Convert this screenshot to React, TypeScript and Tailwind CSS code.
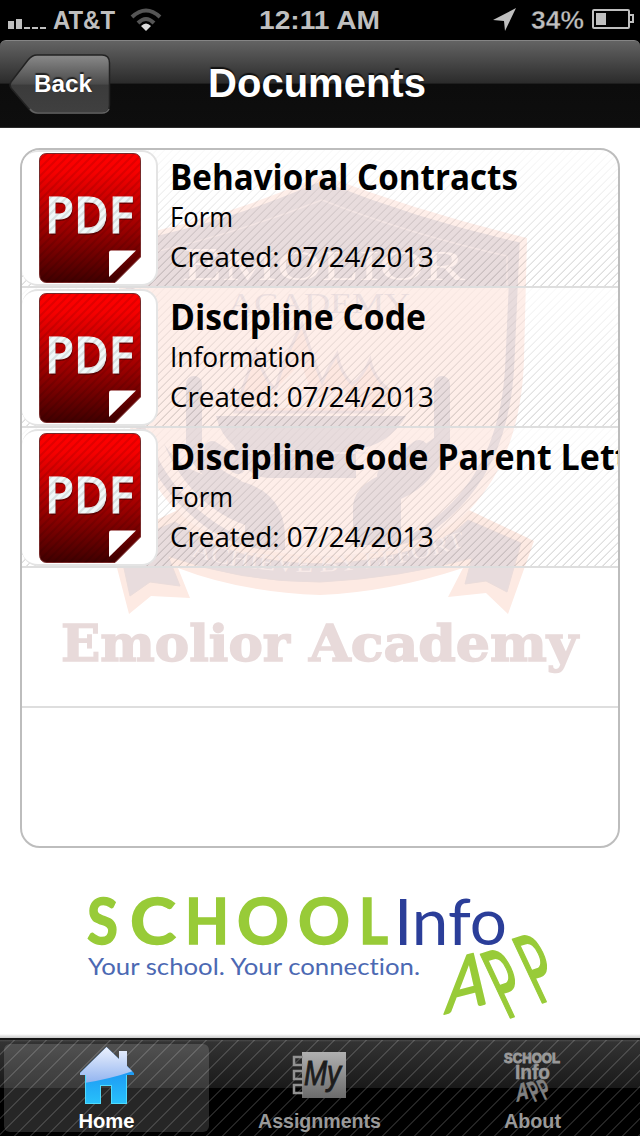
const documents = [
  { title: 'Behavioral Contracts', type: 'Form', created: '07/24/2013', titleWidth: 348, typeWidth: 63 },
  { title: 'Discipline Code', type: 'Information', created: '07/24/2013', titleWidth: 256, typeWidth: 146 },
  { title: 'Discipline Code Parent Letter', type: 'Form', created: '07/24/2013', titleWidth: 495, typeWidth: 63 },
];

function StatusBar() {
  return (
    <div className="flex h-10 items-center bg-black text-[#bfbfbf]">
      <svg width="640" height="40" fontFamily="Liberation Sans" fontWeight="700" fontSize="26" fill="currentColor">
        {/* Signal */}
        <path d="M8 21h6v8h-6zM16 19h6v10h-6zM24 27h6v2h-6zM32 27h6v2h-6zM40 27h6v2h-6z" />
        <text x="53" y="29" textLength="62" lengthAdjust="spacingAndGlyphs">AT&amp;T</text>
        {/* Wifi */}
        <g fill="none" stroke="#555" strokeWidth="4">
          <path d="M132 17Q146 4 160 17" />
          <path d="M138 23Q146 15 154 23" />
        </g>
        <path d="M141 26Q146 21 151 26L146 31z" fill="#ddd" />
        <text x="259" y="29" textLength="121" lengthAdjust="spacingAndGlyphs">12:11 AM</text>
        {/* Location */}
        <path d="M516 8L493 20L504 21L505 31z" />
        <text x="531" y="29" textLength="53" lengthAdjust="spacingAndGlyphs" stroke="#000" strokeWidth="0.400">34%</text>
        {/* Battery */}
        <rect x="593" y="10" width="36" height="18" rx="1" fill="none" stroke="currentColor" strokeWidth="2" />
        <path d="M630 15h3v7h-3" fill="none" stroke="currentColor" strokeWidth="2" />
        <rect x="596" y="13" width="10" height="12" />
      </svg>
    </div>
  );
}

function NavBar() {
  return (
    <div className="bg-black">
      <header className="relative flex h-[88px] items-center justify-center rounded-t-md border-t border-b border-t-[#858585] border-b-[#2b2b2b] bg-[linear-gradient(#636363,#2b2b2b_49%,#0c0c0c_50%,#0e0e0e)]">
        <button className="absolute top-[11px] left-2">
          <svg width="104" height="64" viewBox="8 52 104 64">
            <defs>
              <linearGradient id="back" x1="0" y1="0" x2="0" y2="1">
                <stop offset="0" stopColor="#8a8a8a" />
                <stop offset="0.5" stopColor="#4a4a4a" />
                <stop offset="0.52" stopColor="#3b3b3b" />
                <stop offset="1" stopColor="#404040" />
              </linearGradient>
            </defs>
            <path d="M37 55H102Q109.500 55 109.500 63V105Q109.500 113 102 113H37Q32 113 28 108L11 88Q9 85 11 82L28 60Q32 55 37 55Z" fill="url(#back)" stroke="#222" strokeWidth="1.5" />
            <path d="M30 109Q33 113 38 113H102Q107 113 109 109" fill="none" stroke="#636363" strokeWidth="1.5" />
            <text x="34" y="92" textLength="58" lengthAdjust="spacingAndGlyphs" fontFamily="Liberation Sans" fontWeight="700" fontSize="24" fill="#fff" className="[text-shadow:0_-2px_1px_#222]">Back</text>
          </svg>
        </button>
        <h1 className="relative -top-px -left-[3px] font-['Liberation_Sans'] text-[40px] leading-none font-bold text-white [text-shadow:0_-2px_1px_#111]">
          Documents
        </h1>
      </header>
    </div>
  );
}

function PdfIcon({ id }: { id: string }) {
  return (
    <svg width="104" height="132" viewBox="38 152 104 132">
      <defs>
        <linearGradient id={id} x1="0" y1="0" x2="0" y2="1">
          <stop offset="0" stopColor="#ff0000" />
          <stop offset="0.15" stopColor="#f50000" />
          <stop offset="0.6" stopColor="#980000" />
          <stop offset="1" stopColor="#400000" />
        </linearGradient>
        <pattern id={`${id}-hatch`} width="8" height="8" patternUnits="userSpaceOnUse">
          <path d="M-2 2L2 -2M-1 9L9 -1M6 10L10 6" stroke="#000" strokeWidth="2" opacity="0.1" />
        </pattern>
      </defs>
      <path d="M47 153.500H133Q140.500 153.500 140.500 161V257L115 282.500H47Q39.500 282.500 39.500 274V161Q39.500 153.500 47 153.500Z" fill={`url(#${id})`} stroke="#7a2a2a" />
      <g fontFamily="Open Sans" fontSize="50" fontWeight="600" strokeWidth="1">
        <text x="46" y="235" textLength="89" lengthAdjust="spacingAndGlyphs" fill="#400" opacity="0.6">PDF</text>
        <text x="45" y="233" textLength="89" lengthAdjust="spacingAndGlyphs" fill="#f1f8f9" stroke="#f1f8f9">PDF</text>
      </g>
      <path d="M47 153.500H133Q140.500 153.500 140.500 161V257L115 282.500H47Q39.500 282.500 39.500 274V161Q39.500 153.500 47 153.500Z" fill={`url(#${id}-hatch)`} />
      <path d="M111 250.500H136L109 277V252.500Q109 250.500 111 250.500Z" fill="#fff" />
    </svg>
  );
}

function Crest() {
  return (
    <svg className="absolute top-0 left-0" width="596" height="696" viewBox="22 150 596 696">
      {/* Shield */}
      <path d="M322 175Q222 220 119 238V360Q125 480 205 535Q260 572 322 592Q390 572 440 535Q520 480 524 360L527 238Q420 212 322 175Z" fill="#feeee9" />
      <path d="M322 186Q222 229 130 246V360Q134 472 212 526Q265 560 322 580Q385 560 432 526Q506 472 510 360L515 246Q418 224 322 186Z" fill="#feeee9" stroke="#e8dcdd" strokeWidth="9" />
      <path d="M322 190Q222 231 130 250V287H513V250Q418 226 322 190Z" fill="#e8dcdd" />
      <path d="M136 285V256Q230 236 322 200Q412 235 507 256V285" fill="none" stroke="#f3e5e4" strokeWidth="1.500" />
      <text x="182" y="280" textLength="283" lengthAdjust="spacingAndGlyphs" fontFamily="Liberation Serif" fontSize="46" fill="#fdefec">E<tspan fontSize="43">MOLIOR</tspan></text>
      <text x="228" y="313" textLength="182" lengthAdjust="spacingAndGlyphs" fontFamily="Liberation Serif" fontSize="30" fill="#ecdfe0">ACADEMY</text>
      {/* Flame */}
      <path d="M235 412Q242 390 256 351Q264 380 276 390Q279 370 302 324Q310 350 322 382Q328 368 337 354Q340 372 352 384Q362 378 370 360Q374 380 392 392L382 412Z" fill="#fde7e0" stroke="#efe0e0" strokeWidth="3" />
      <path d="M260 408Q272 392 302 362Q306 386 320 400L340 384L358 408Z" fill="#feeee9" />
      {/* Bowl */}
      <path d="M216 416H406Q388 446 356 449V478H270Q245 478 234 446Q220 434 216 416Z" fill="#e8dcdd" />
      <path d="M250 453H370" stroke="#f6e9e8" strokeWidth="2" />
      {/* Hands */}
      <g fill="none" stroke="#e8dcdd" strokeLinecap="round">
        <path d="M194 384V450Q207 474 235 486" strokeWidth="16" />
        <path d="M442 384V442L398 474" strokeWidth="16" />
        <path d="M212 449L238 466" strokeWidth="16" />
        <path d="M419 449L386 476" strokeWidth="18" />
      </g>
      <path d="M164 444Q185 478 235 480Q285 490 285 538V550H245V525Q190 505 164 444Z" fill="#e8dcdd" />
      <path d="M447 447Q435 484 401 499V545H353V506Q355 480 401 468Z" fill="#e8dcdd" />
      {/* Ribbon */}
      <path d="M110 541L178 510Q190 530 250 547Q322 564 388 548Q445 535 469 510L534 541L508 614L486 593L448 597L463 568Q390 592 320 595Q240 592 178 568L190 598L151 596L129 614Z" fill="#fdeae3" />
      <path d="M119 545L175 522Q215 550 260 558Q330 572 405 552Q447 542 468 520L521 543L507 592L486 581L465 584L472 558Q400 578 320 582Q240 582 168 556L180 586L150 582L130 596Z" fill="#e8dcdd" stroke="#eadcdb" />
      <path id="motto" d="M190 556Q330 594 480 541" fill="none" />
      <text fontFamily="Liberation Serif" fontSize="23" fill="#f8ebe9">
        <textPath href="#motto" textLength="280" lengthAdjust="spacingAndGlyphs">ACHIEVE BY EFFORT</textPath>
      </text>
      <g fontFamily="DejaVu Serif" fontWeight="700" fontSize="51" fill="#e8dada" stroke="#e8dada" strokeWidth="1.500">
        <text x="61" y="661" textLength="229" lengthAdjust="spacingAndGlyphs">Emolior</text>
        <text x="309" y="661" textLength="269" lengthAdjust="spacingAndGlyphs">Academy</text>
      </g>
    </svg>
  );
}

function DocumentList() {
  return (
    <section className="relative mx-5 mt-5 h-[700px] overflow-hidden rounded-[20px] border-2 border-[#bdbdbd] bg-white">
      <Crest />
      <div className="relative">
        {documents.map((doc, index) => (
          <div key={index} className={index === 0 ? 'relative flex h-[138px] overflow-hidden border-b-2 border-[#dedede]' : 'relative flex h-[140px] overflow-hidden border-b-2 border-[#dedede]'}>
            {/* Hatched background, darker towards the bottom of the row */}
            <div className="absolute inset-0 bg-[repeating-linear-gradient(135deg,transparent_0_4px,#0000002e_4.500px_4.800px,transparent_5.400px_5.657px)] [mask-image:linear-gradient(#0002,#000)]"></div>
            <div className={index === 0 ? 'relative flex h-[136px] w-[136px] shrink-0 justify-center rounded-2xl border-2 border-l-0 border-[#e4e4e4] bg-white pl-0.5' : 'relative mt-px flex h-[137px] w-[136px] shrink-0 justify-center rounded-2xl border-2 border-l-0 border-[#e4e4e4] bg-white pt-px pl-0.5'}>
              <PdfIcon id={`pdf${index}`} />
            </div>
            <svg className={index === 0 ? 'relative shrink-0' : 'relative mt-0.5 shrink-0'} width="460" height="136" viewBox="158 150 460 136" fill="#000">
              <text x="170" y="190" textLength={doc.titleWidth} fontFamily="Open Sans" fontWeight="700" fontSize="35" lengthAdjust="spacingAndGlyphs">{doc.title}</text>
              <g fontFamily="Open Sans" fontSize="27">
                <text x="170" y="227" textLength={doc.typeWidth} lengthAdjust="spacingAndGlyphs">{doc.type}</text>
                <text x="170" y="267" textLength="264" lengthAdjust="spacingAndGlyphs">Created: {doc.created}</text>
              </g>
            </svg>
          </div>
        ))}
        <div className="h-[140px] border-b-2 border-[#dedede]"></div>
      </div>
    </section>
  );
}

function SchoolInfoLogo() {
  return (
    <svg className="mx-auto mt-10" width="480" height="146" viewBox="80 888 480 146">
      <g fontFamily="Lato" fontWeight="700" fontSize="63" fill="#98cb38" stroke="#98cb38" strokeWidth="1.500">
        <text x="87" y="944" textLength="31" lengthAdjust="spacingAndGlyphs">S</text>
        <text x="130" y="944" textLength="46" lengthAdjust="spacingAndGlyphs">C</text>
        <text x="185" y="944" textLength="44" lengthAdjust="spacingAndGlyphs">H</text>
        <text x="237" y="944" textLength="52" lengthAdjust="spacingAndGlyphs">O</text>
        <text x="298" y="944" textLength="52" lengthAdjust="spacingAndGlyphs">O</text>
        <text x="359" y="944" textLength="29" lengthAdjust="spacingAndGlyphs">L</text>
      </g>
      <text x="394" y="945" textLength="113" lengthAdjust="spacingAndGlyphs" fontFamily="Lato" fontSize="63" fill="#2b3e99">Info</text>
      <text x="88" y="975" textLength="332" lengthAdjust="spacingAndGlyphs" fontFamily="Lato" fontSize="23" fill="#4c69b3" className="[font-variant-ligatures:none]">Your school. Your connection.</text>
      {/* Hand-lettered mark */}
      <g fontFamily="Lato" fill="#98cb38" stroke="#98cb38" strokeWidth="2" strokeLinejoin="round">
        <text transform="matrix(.8 -.2 -.1 1 444 1014)" fontSize="76">A</text>
        <text transform="matrix(.5 -.16 .47 1 506 1019)" fontSize="88">P</text>
        <text transform="matrix(.5 -.16 .47 1 538 1004)" fontSize="88">P</text>
      </g>
    </svg>
  );
}

function HomeIcon() {
  return (
    <svg width="60" height="64" viewBox="78 1044 60 64">
      <defs>
        <linearGradient id="house" x1="0" y1="0" x2="0" y2="1">
          <stop offset="0" stopColor="#1478ee" />
          <stop offset="1" stopColor="#29c4fb" />
        </linearGradient>
        <linearGradient id="gloss" x1="0" y1="0" x2="0" y2="1">
          <stop offset="0" stopColor="#f1f5ff" />
          <stop offset="1" stopColor="#8fb2ef" />
        </linearGradient>
        <clipPath id="house-shape">
          <path d="M107.500 1047L120 1059V1051H128V1066L135 1073V1075H128V1104H112V1086H102V1104H86V1075H81V1073Z" />
        </clipPath>
      </defs>
      <g clipPath="url(#house-shape)">
        <path d="M80 1045H137V1106H80Z" fill="url(#house)" />
        <path d="M80 1045H137V1070Q112 1079 80 1084Z" fill="url(#gloss)" />
        <path d="M128 1075V1104H112V1086H102V1104H86V1075" fill="none" stroke="#4fdcff" strokeWidth="2" />
      </g>
    </svg>
  );
}

function AssignmentsIcon() {
  return (
    <svg width="60" height="64" viewBox="290 1044 60 64">
      <defs>
        <linearGradient id="book" x1="0" y1="0" x2="0" y2="1">
          <stop offset="0" stopColor="#b0b0b0" />
          <stop offset="1" stopColor="#6b6b6b" />
        </linearGradient>
      </defs>
      <path d="M302 1052H346V1098H302Z" fill="url(#book)" />
      <path d="M303 1057H294V1065H303M303 1071H294V1079H303M303 1085H294V1093H303" fill="none" stroke="#929292" strokeWidth="2.500" />
      <text x="304" y="1085" textLength="37" lengthAdjust="spacingAndGlyphs" fontFamily="Liberation Sans" fontStyle="italic" fontSize="35" fill="#1c1c1c" stroke="#1c1c1c" strokeWidth="1">My</text>
    </svg>
  );
}

function AboutIcon() {
  return (
    <svg width="60" height="64" viewBox="503 1044 60 64" fontFamily="Liberation Sans" fontWeight="700" fill="#999" stroke="#999">
      <text x="504" y="1063" textLength="56" lengthAdjust="spacingAndGlyphs" fontSize="14">SCHOOL</text>
      <text x="515" y="1079" textLength="35" lengthAdjust="spacingAndGlyphs" fontSize="20" strokeWidth="0.500">Info</text>
      <g fill="#808080" stroke="#808080" strokeWidth="0.500">
        <text transform="matrix(.7 -.2 0 1 516 1102)" fontSize="25">A</text>
        <text transform="matrix(.5 -.16 .47 1 534 1102)" fontSize="27">P</text>
        <text transform="matrix(.5 -.16 .47 1 544 1100)" fontSize="27">P</text>
      </g>
    </svg>
  );
}

const tabs = [
  { label: 'Home', Icon: HomeIcon, width: 56 },
  { label: 'Assignments', Icon: AssignmentsIcon, width: 123 },
  { label: 'About', Icon: AboutIcon, width: 57 },
];

function TabBar() {
  return (
    <nav className="relative h-[102px] bg-white">
      <div className="h-1 bg-gradient-to-b from-white to-[#c9c9c9]"></div>
      <div className="relative flex h-[98px] gap-2 border-t-2 border-[#151515] bg-[linear-gradient(#4a4a4a,#333_2px,#191919_48px,#000_48px)] px-1 pt-1 pb-1">
        <div className="absolute inset-0 bg-[repeating-linear-gradient(135deg,transparent_0_9.300px,#ffffff24_9.800px_10.800px,transparent_11.314px)]"></div>
        {tabs.map(({ label, Icon, width }, index) => (
          <a
            key={label}
            className={index === 0 ? 'relative flex w-[205px] flex-col items-center rounded-md bg-white/15 text-white' : 'relative flex w-[205px] flex-col items-center text-[#999]'}
          >
            <Icon />
            <svg width="130" height="24" fill="currentColor">
              <text x="64.500" y="20" textAnchor="middle" textLength={width} lengthAdjust="spacingAndGlyphs" fontFamily="Liberation Sans" fontWeight="700" fontSize="20">{label}</text>
            </svg>
          </a>
        ))}
      </div>
    </nav>
  );
}

export default function App() {
  return (
    <div className="flex h-[1136px] w-[640px] flex-col overflow-hidden bg-white">
      <StatusBar />
      <NavBar />
      <DocumentList />
      <SchoolInfoLogo />
      <TabBar />
    </div>
  );
}
